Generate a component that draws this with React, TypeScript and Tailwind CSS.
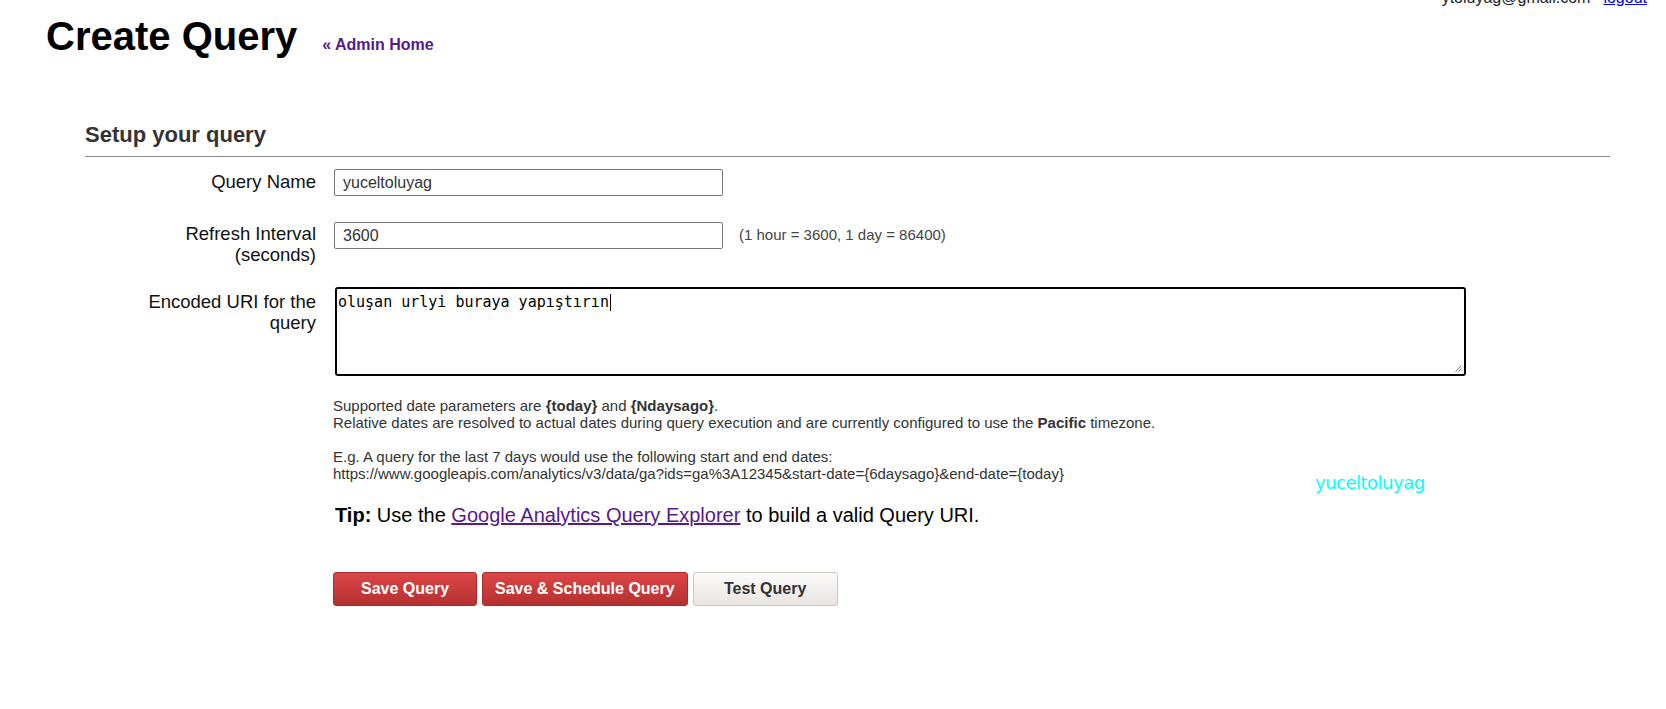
const labelCls = "w-[200px] shrink-0 text-right text-[18.5px] leading-[21px] text-[#111]";
const inputCls =
  "h-[27px] w-[389px] rounded-[2px] border border-[#767676] bg-white px-[8px] text-[16px] text-[#333] outline-none";
const redBtn =
  "h-[34px] min-w-[144px] rounded-[3px] border border-[#a52d2d] bg-linear-to-b from-[#dd4646] to-[#b53030] px-[12px] text-[16px] font-bold text-white";

const ResizeGrip = () => (
  <svg className="absolute right-[2px] bottom-[2px] h-[9px] w-[9px]" viewBox="0 0 9 9">
    <path d="M8.5 2.5 L2.5 8.5 M8.5 5.5 L5.5 8.5" stroke="#7a7a7a" strokeWidth="1" fill="none" />
  </svg>
);

export default function App() {
  return (
    <div className="relative min-h-screen overflow-hidden bg-white font-['Liberation_Sans',Arial,sans-serif] text-black">
      {/* header, mostly scrolled above the viewport */}
      <div className="-mt-[11px] flex h-[18px] justify-end gap-[13px] pr-[19px] text-[16px] leading-[18px]">
        <span className="text-[#222]">ytoluyag@gmail.com</span>
        <a href="#" className="text-[#0000ee] underline">
          logout
        </a>
      </div>

      <div className="mt-[5px] flex items-baseline gap-[25px] pl-[46px]">
        <h1 className="text-[40px] font-bold leading-[48px]">Create Query</h1>
        <a href="#" className="text-[16px] font-bold text-[#551a8b]">
          « Admin Home
        </a>
      </div>

      <div className="mt-[62px] ml-[85px] mr-[56px]">
        <h2 className="border-b border-[#8c8c8c] pb-[8px] text-[22px] font-bold leading-[26px] text-[#333]">
          Setup your query
        </h2>

        <div className="mt-[12px] flex gap-[18px] pl-[31px]">
          <label className={`${labelCls} pt-[2px]`}>Query Name</label>
          <input className={inputCls} defaultValue="yuceltoluyag" />
        </div>

        <div className="mt-[26px] flex gap-[18px] pl-[31px]">
          <label className={`${labelCls} pt-[1px]`}>Refresh Interval (seconds)</label>
          <div className="flex h-[27px] items-center gap-[16px]">
            <input className={inputCls} defaultValue="3600" />
            <span className="text-[15px] text-[#444]">(1 hour = 3600, 1 day = 86400)</span>
          </div>
        </div>

        <div className="mt-[22px] flex gap-[18px] pl-[31px]">
          <label className={`${labelCls} pt-[4px]`}>Encoded URI for the query</label>
          <div className="relative ml-[1px] h-[89px] w-[1131px] rounded-[3px] border-2 border-black bg-white px-[1px] pt-[4px] font-['DejaVu_Sans_Mono',monospace] text-[15px] leading-[18px] text-black">
            oluşan urlyi buraya yapıştırın
            <span className="ml-[1px] inline-block h-[17px] w-px bg-black align-[-4px]" />
            <ResizeGrip />
          </div>
        </div>

        <div className="pl-[248px]">
          <p className="mt-[21px] text-[15px] leading-[17px] text-[#333]">
            Supported date parameters are <b>{'{today}'}</b> and <b>{'{Ndaysago}'}</b>.
            <br />
            Relative dates are resolved to actual dates during query execution and are currently configured to use the{' '}
            <b>Pacific</b> timezone.
            <br />
            <br />
            E.g. A query for the last 7 days would use the following start and end dates:
            <br />
            https://www.googleapis.com/analytics/v3/data/ga?ids=ga%3A12345&amp;start-date={'{6daysago}'}&amp;end-date=
            {'{today}'}
          </p>

          <p className="mt-[21px] pl-[2px] text-[20px] leading-[24px] text-black">
            <b>Tip:</b> Use the{' '}
            <a href="#" className="text-[#551a8b] underline">
              Google Analytics Query Explorer
            </a>{' '}
            to build a valid Query URI.
          </p>

          <div className="mt-[45px] flex gap-[5px]">
            <button className={redBtn}>Save Query</button>
            <button className={redBtn}>Save &amp; Schedule Query</button>
            <button className="h-[34px] min-w-[145px] rounded-[3px] border border-[#cbc7c3] bg-linear-to-b from-[#fcfcfb] to-[#e8e4e0] px-[12px] text-[16px] font-bold text-[#333]">
              Test Query
            </button>
          </div>
        </div>
      </div>

      <span className="absolute top-[472px] left-[1315px] font-['DejaVu_Sans',sans-serif] text-[18px] leading-[21px] tracking-[-0.5px] text-[#00ffff]">
        yuceltoluyag
      </span>
    </div>
  );
}
